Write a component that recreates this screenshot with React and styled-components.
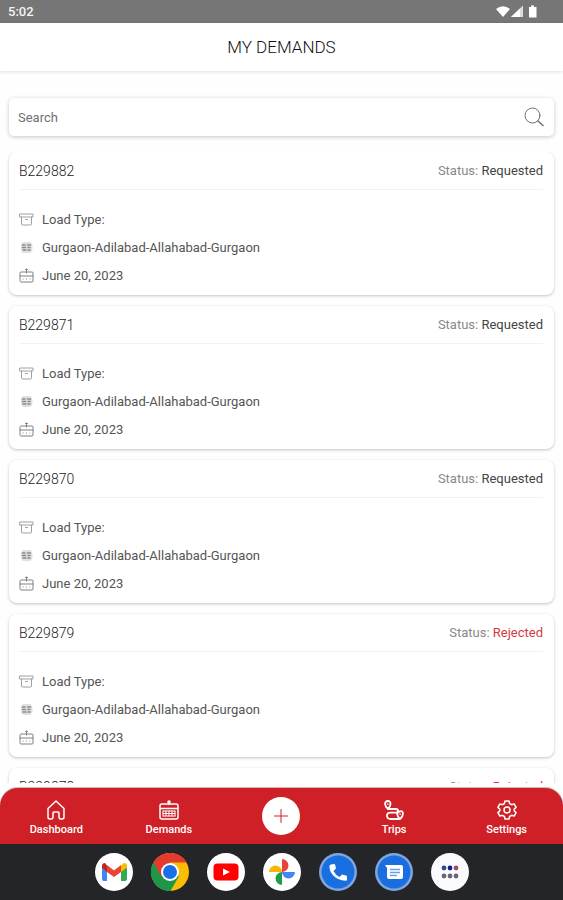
import React, { useState } from "react";
import styled, { createGlobalStyle } from "styled-components";

const GlobalStyle = createGlobalStyle`
  * {
    box-sizing: border-box;
  }

  body {
    margin: 0;
    background: #fefefe;
    font-family: Roboto, "Liberation Sans", sans-serif;
  }
`;

const Screen = styled.div`
  display: flex;
  flex-direction: column;
  height: 100vh;
  overflow: hidden;
`;

const StatusBar = styled.div`
  display: flex;
  flex: none;
  align-items: center;
  justify-content: space-between;
  height: 23px;
  padding: 0 25px 0 8px;
  background: #767676;
  color: #f4f4f4;
  font-size: 13px;
  font-weight: 500;
`;

const StatusIcons = styled.svg`
  width: 42px;
  height: 16px;
`;

const Header = styled.header`
  display: flex;
  flex: none;
  align-items: center;
  justify-content: center;
  height: 48px;
  background: #fff;
  box-shadow: 0 1px 3px rgba(0, 0, 0, 0.12);
`;

const Title = styled.h1`
  margin: 0;
  color: #111;
  font-size: 17px;
  font-weight: 300;
`;

const SearchBox = styled.label`
  display: flex;
  flex: none;
  align-items: center;
  height: 38px;
  margin: 27px 9px 16px;
  padding: 0 10px 0 9px;
  border-radius: 5px;
  background: #fff;
  box-shadow: 0 1px 4px rgba(0, 0, 0, 0.22);
`;

const SearchInput = styled.input`
  flex: 1;
  min-width: 0;
  padding: 0;
  border: none;
  outline: none;
  background: none;
  color: #444;
  font: 400 13px Roboto, "Liberation Sans", sans-serif;

  &::placeholder {
    color: #707070;
    opacity: 1;
  }
`;

const List = styled.main`
  display: flex;
  flex: 1;
  flex-direction: column;
  gap: 11px;
  min-height: 0;
  padding: 0 9px;
  overflow: hidden;
`;

const Card = styled.article`
  flex: none;
  height: 143px;
  padding: 0 11px 0 10px;
  border-radius: 8px;
  background: #fff;
  box-shadow: 0 1px 3px rgba(0, 0, 0, 0.24);
`;

const CardHead = styled.div`
  display: flex;
  align-items: center;
  justify-content: space-between;
  height: 38px;
  border-bottom: 1px solid #f3f3f3;
`;

const DemandId = styled.span`
  color: #222;
  font-size: 14px;
  font-weight: 300;
`;

const Status = styled.span`
  color: #888;
  font-size: 13px;
`;

const StatusValue = styled.span`
  color: ${(props) => (props.$rejected ? "#d43a46" : "#444")};
`;

const Details = styled.ul`
  margin: 0;
  padding: 15px 0 0;
  list-style: none;
`;

const Detail = styled.li`
  display: flex;
  align-items: center;
  gap: 8px;
  height: 28px;
  color: #555;
  font-size: 13px;
`;

const LineIcon = styled.svg`
  flex: none;
  width: ${(props) => props.$size}px;
  height: ${(props) => props.$size}px;
  fill: none;
  stroke: currentColor;
  stroke-width: ${(props) => props.$weight || 1};
  stroke-linecap: round;
  stroke-linejoin: round;
`;

const NavBar = styled.nav`
  display: grid;
  flex: none;
  grid-template-columns: repeat(5, 1fr);
  height: 56px;
  margin-top: 5px;
  border-radius: 18px 18px 0 0;
  background: #cf2027;
  box-shadow: 0 -1px 1px rgba(90, 0, 0, 0.3);
`;

const NavLink = styled.a`
  display: flex;
  flex-direction: column;
  align-items: center;
  gap: 2px;
  padding-top: 12px;
  color: #fff;
  font-size: 11px;
  font-weight: 500;
  line-height: 16px;
  text-decoration: none;
`;

const AddButton = styled.button`
  display: flex;
  align-items: center;
  justify-content: center;
  align-self: center;
  justify-self: center;
  width: 38px;
  height: 38px;
  padding: 0;
  border: none;
  border-radius: 50%;
  background: #fff;
  color: #cf2027;
  cursor: pointer;
`;

const Dock = styled.div`
  display: flex;
  flex: none;
  align-items: center;
  justify-content: center;
  gap: 18px;
  height: 56px;
  background: #242529;
`;

const DockButton = styled.button`
  width: 38px;
  height: 38px;
  padding: 0;
  border: none;
  border-radius: 50%;
  background: none;
  cursor: pointer;
`;

const AppLogo = styled.svg`
  display: block;
  width: 38px;
  height: 38px;
`;

const demands = [
  { id: "B229882", status: "Requested" },
  { id: "B229871", status: "Requested" },
  { id: "B229870", status: "Requested" },
  { id: "B229879", status: "Rejected" },
  { id: "B229878", status: "Rejected" },
];

const route = "Gurgaon-Adilabad-Allahabad-Gurgaon";
const date = "June 20, 2023";

const BoxIcon = () => (
  <LineIcon $size={15} viewBox="0 0 15 15" color="#a0a0a0">
    <path d="M1 2h13v3H1zM2.500 5v7q0 1 1 1h8q1 0 1-1V5M6.500 7.500h2" />
  </LineIcon>
);

const RouteIcon = () => (
  <LineIcon $size={15} viewBox="0 0 15 15" color="#8a8a8a">
    <path
      d="M4 2h7q2.500 1 2.500 5.500T11 13H4q-2-1-2-5.500T4 2z"
      fill="#e0e0e0"
      stroke="none"
    />
    <path d="M3.500 5h2.500M8.500 5h3M3.500 7.500h3M9 7.500h2M4 10h3M9 10h2" strokeWidth="1.500" />
  </LineIcon>
);

const CalendarIcon = () => (
  <LineIcon $size={15} viewBox="0 0 15 15" color="#808080">
    <path d="M1 5q0-1 1-1h11q1 0 1 1v8q0 1-1 1H2q-1 0-1-1zM1 8h13M7.500 1v4M6.500 1.500h2" />
    <path d="M4 11h.1M7.500 11h.1M11 11h.1" />
  </LineIcon>
);

const SearchIcon = () => (
  <LineIcon $size={20} viewBox="0 0 20 20" color="#707070">
    <circle cx="8.500" cy="8.500" r="7.500" />
    <path d="M14 14l5 4.500" strokeWidth="1.500" />
  </LineIcon>
);

const HomeIcon = () => (
  <LineIcon $size={20} $weight={1.5} viewBox="0 0 20 20">
    <path d="M2 8.500L10 1l8 7.500V17q0 2-2 2h-1q-2 0-2-2v-4q0-1-1-1H8q-1 0-1 1v4q0 2-2 2H4q-2 0-2-2z" />
  </LineIcon>
);

const DemandsIcon = () => (
  <LineIcon $size={20} $weight={1.5} viewBox="0 0 20 20">
    <path d="M1 6q0-2 2-2h14q2 0 2 2v11q0 2-2 2H3q-2 0-2-2zM1 8.500h18M10 1.500v3" />
    <circle cx="10" cy="2" r="1" />
    <path d="M4 11v5M7 11v5M10 11v5M13 11v5M16 11v5M4 11h12M4 13.500h12M4 16h12" strokeWidth="1" />
  </LineIcon>
);

const TripsIcon = () => (
  <LineIcon $size={20} $weight={1.8} viewBox="0 0 20 20">
    <path d="M4 9Q1 6 1 4q0-3 2.800-3T6.500 4Q6.500 6 4 9h8q2 0 2 1.800t-2 1.800H6.500q-3.500 0-3.500 3.200T6.500 19H16q-2.800-3-2.800-5t2.900-2.700T19 14q0 2-3 5" />
    <path d="M3.800 4v.2M16.100 14v.2" strokeWidth="1.500" />
  </LineIcon>
);

const SettingsIcon = () => (
  <LineIcon $size={20} $weight={1.5} viewBox="0 0 20 20">
    <path d="M8 1h4l.6 2.500 2 1.200 2.500-.8 2 3.500-1.900 1.700v1.800l1.900 1.700-2 3.500-2.500-.8-2 1.200L12 19H8l-.6-2.500-2-1.200-2.500.8-2-3.500 1.900-1.700V9.100L.9 7.400l2-3.500 2.500.8 2-1.200z" />
    <circle cx="10" cy="10" r="3" />
  </LineIcon>
);

const PlusIcon = () => (
  <LineIcon $size={14} viewBox="0 0 14 14">
    <path d="M7 0.500v13M0.500 7h13" />
  </LineIcon>
);

const Gmail = () => (
  <AppLogo viewBox="0 0 38 38">
    <circle cx="19" cy="19" r="19" fill="#fff" />
    <path d="M7 14v12q0 2 2 2h3V17z" fill="#4285f4" />
    <path d="M26 17v11h4q2 0 2-2V14z" fill="#34a853" />
    <path d="M26 12.500V19l6-4.500V13q0-3-3-3-1 0-3 2.500z" fill="#fbbc04" />
    <path d="M12 12.500V19l-5-4.500V13q0-3 3-3z" fill="#c5221f" />
    <path d="M12 12v7l7 5 7-5v-7l-7 5.500z" fill="#ea4335" />
  </AppLogo>
);

const Chrome = () => (
  <AppLogo viewBox="0 0 38 38">
    <circle cx="19" cy="19" r="19" fill="#fbbc04" />
    <path d="M19 19L2.500 9.500A19 19 0 0 0 19.500 38L28 23z" fill="#1e9648" />
    <path d="M2.500 9.500A19 19 0 0 1 35.500 9.500H19L10.500 24z" fill="#e33b2e" />
    <circle cx="19" cy="19" r="9" fill="#fff" />
    <circle cx="19" cy="19" r="7" fill="#1a6fe8" />
  </AppLogo>
);

const YouTube = () => (
  <AppLogo viewBox="0 0 38 38">
    <circle cx="19" cy="19" r="19" fill="#fff" />
    <rect x="6.500" y="10.500" width="25" height="17" rx="4" fill="#f00" />
    <path d="M16 15.500l7 3.500-7 3.500z" fill="#fff" />
  </AppLogo>
);

const Photos = () => (
  <AppLogo viewBox="0 0 38 38">
    <circle cx="19" cy="19" r="19" fill="#fff" />
    <path d="M19 19V6a6.500 6.500 0 0 1 0 13z" fill="#ea4335" />
    <path d="M19 19h13a6.500 6.500 0 0 1-13 0z" fill="#4285f4" />
    <path d="M19 19v13a6.500 6.500 0 0 1 0-13z" fill="#1e9e48" />
    <path d="M19 19H6a6.500 6.500 0 0 1 13 0z" fill="#fbb404" />
  </AppLogo>
);

const Phone = () => (
  <AppLogo viewBox="0 0 38 38">
    <circle cx="19" cy="19" r="19" fill="#7fa5db" />
    <circle cx="19" cy="19" r="16.500" fill="#1a6fe0" />
    <path
      d="M12 11.500l3-.5q1 0 1.200 1l.8 3.500-2.500 2.500q2 4 6 6l2.500-2.500 4 1q1 .2 1 1.200v3q0 1-1.500 1-7.500-.5-12-5t-4-10q0-1 1.500-1.200z"
      fill="#fff"
    />
  </AppLogo>
);

const Messages = () => (
  <AppLogo viewBox="0 0 38 38">
    <circle cx="19" cy="19" r="19" fill="#7fa5db" />
    <circle cx="19" cy="19" r="16.500" fill="#1a6fe0" />
    <path d="M10 12h16q2 0 2 2v10q0 2-2 2H14q-2 0-2-2v-9z" fill="#fff" />
    <path d="M15 16.500h10M15 19.500h10M15 22.500h7" stroke="#6ba0ec" strokeWidth="1.500" />
  </AppLogo>
);

const AllApps = () => (
  <AppLogo viewBox="0 0 38 38">
    <circle cx="19" cy="19" r="19" fill="#fafafe" />
    <circle cx="13" cy="15" r="2.400" fill="#34479a" />
    <circle cx="19" cy="15" r="2.400" fill="#101f86" />
    <circle cx="25" cy="15" r="2.400" fill="#97506c" />
    <circle cx="13" cy="23" r="2.400" fill="#66667a" />
    <circle cx="19" cy="23" r="2.400" fill="#66667a" />
    <circle cx="25" cy="23" r="2.400" fill="#66667a" />
  </AppLogo>
);

const apps = [
  { name: "Gmail", Logo: Gmail },
  { name: "Chrome", Logo: Chrome },
  { name: "YouTube", Logo: YouTube },
  { name: "Photos", Logo: Photos },
  { name: "Phone", Logo: Phone },
  { name: "Messages", Logo: Messages },
  { name: "All apps", Logo: AllApps },
];

const DemandCard = ({ demand }) => (
  <Card>
    <CardHead>
      <DemandId>{demand.id}</DemandId>
      <Status>
        Status:{" "}
        <StatusValue $rejected={demand.status === "Rejected"}>
          {demand.status}
        </StatusValue>
      </Status>
    </CardHead>
    <Details>
      <Detail>
        <BoxIcon />
        Load Type:
      </Detail>
      <Detail>
        <RouteIcon />
        {route}
      </Detail>
      <Detail>
        <CalendarIcon />
        {date}
      </Detail>
    </Details>
  </Card>
);

const App = () => {
  const [query, setQuery] = useState("");

  const visible = demands.filter((demand) =>
    demand.id.toLowerCase().includes(query.toLowerCase())
  );

  return (
    <Screen>
      <GlobalStyle />
      <StatusBar>
        5:02
        <StatusIcons viewBox="0 0 42 16" fill="#fff">
          <path d="M0 5q7-5.500 14 0L7 13z" />
          <path d="M15 13L27 1.500V13z" opacity="0.75" />
          <path d="M15 13l9-8.500V13z" />
          <path d="M33 3h2V1.500h3V3h2.500v10.500h-7.500z" />
        </StatusIcons>
      </StatusBar>
      <Header>
        <Title>MY DEMANDS</Title>
      </Header>
      <SearchBox>
        <SearchInput
          type="text"
          placeholder="Search"
          aria-label="Search"
          value={query}
          onChange={(e) => setQuery(e.target.value)}
        />
        <SearchIcon />
      </SearchBox>
      <List>
        {visible.map((demand) => (
          <DemandCard key={demand.id} demand={demand} />
        ))}
      </List>
      <NavBar>
        <NavLink href="#dashboard">
          <HomeIcon />
          Dashboard
        </NavLink>
        <NavLink href="#demands">
          <DemandsIcon />
          Demands
        </NavLink>
        <AddButton aria-label="Add demand">
          <PlusIcon />
        </AddButton>
        <NavLink href="#trips">
          <TripsIcon />
          Trips
        </NavLink>
        <NavLink href="#settings">
          <SettingsIcon />
          Settings
        </NavLink>
      </NavBar>
      <Dock>
        {apps.map(({ name, Logo }) => (
          <DockButton key={name} aria-label={name}>
            <Logo />
          </DockButton>
        ))}
      </Dock>
    </Screen>
  );
};

export default App;
